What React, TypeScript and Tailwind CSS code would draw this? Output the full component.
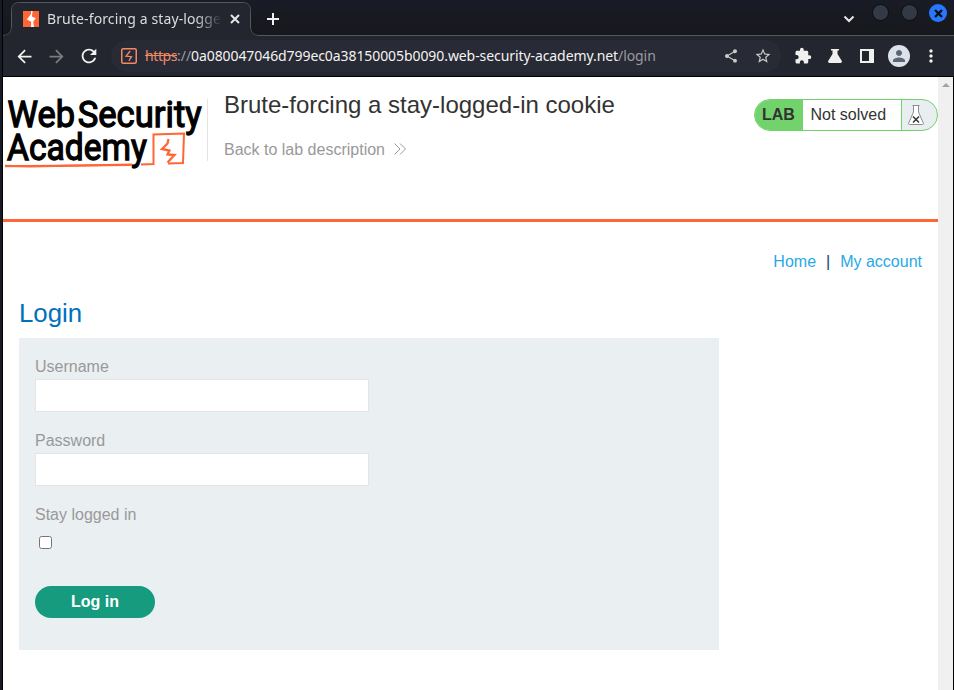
import React from "react";
import { MdArrowBack, MdArrowForward, MdRefresh, MdShare, MdStarBorder, MdExtension, MdPerson, MdMoreVert } from "react-icons/md";

const ui = "font-['Noto_Sans',sans-serif]";

function WindowButton() {
  return <span className="size-[17px] rounded-full border border-[#0b0c10] bg-[#343946]" />;
}

function TabStrip() {
  return (
    <div className={`relative flex h-9 bg-linear-to-b from-[#191c26] to-[#17181c] ${ui}`}>
      <svg className="absolute left-0 top-0" width="951" height="36" viewBox="3 0 951 36" fill="none">
        <path d="M3 35.5 Q11.5 35 11.5 27 V10.500 Q11.500 2.500 19.500 2.500 H242.500 Q250.500 2.500 250.500 10.500 V27 Q250.500 35.500 259 35.500 H954" stroke="#55575e" />
        <path d="M3 36 Q12 35 12 27 V10.500 Q12 3 19.500 3 H242.500 Q250 3 250 10.500 V27 Q250 36 259 36 Z" fill="#23252f" />
      </svg>
      <div className="relative flex h-[38px] w-[240px] items-center pl-5">
        <svg width="16" height="16" viewBox="0 0 16 16" className="shrink-0">
          <path d="M0 0h16v16H0z" fill="#ff6633" />
          <path d="M8 0H9.600L8.900 5.500l3.800 1.700-2.500 3.600L11 16H7.900l.3-5.200-4.400-2.200L8 3z" fill="#fff" />
        </svg>
        <div className="ml-2 w-[175px] overflow-hidden whitespace-nowrap text-[14px] leading-5 tracking-[0.12px] text-[#dcdde0] mask-r-from-85% mask-r-to-100%">
          Brute-forcing a stay-logged-in cookie
        </div>
        <svg width="10" height="10" viewBox="0 0 10 10" className="ml-2" stroke="#e7e7e7" strokeWidth="2">
          <path d="M1 1l8 8M9 1L1 9" />
        </svg>
      </div>
      <svg width="12" height="12" viewBox="0 0 12 12" className="relative ml-6 mt-[13px]" stroke="#f0f0f0" strokeWidth="2">
        <path d="M6 0v12M0 6h12" />
      </svg>
      <div className="relative ml-auto flex gap-3 pr-[7px] pt-[4px]">
        <svg width="12" height="8" viewBox="0 0 12 8" className="mr-[5px] mt-[11px]" fill="none" stroke="#e7e7e7" strokeWidth="2">
          <path d="M1.500 1.500L6 6l4.500-4.500" />
        </svg>
        <WindowButton />
        <WindowButton />
        <span className="-ml-px flex size-[18px] items-center justify-center rounded-full bg-[#2777ff]">
          <svg width="9" height="9" viewBox="0 0 9 9" stroke="#0c0e16" strokeWidth="2.400">
            <path d="M1 1l7 7M8 1L1 8" />
          </svg>
        </span>
      </div>
    </div>
  );
}

function Toolbar() {
  return (
    <div className={`flex h-[41px] items-center border-b border-black bg-[#23252f] pl-[11px] ${ui}`}>
      <MdArrowBack size={21} className="text-[#f1f1ee]" />
      <MdArrowForward size={21} className="ml-[11px] text-[#7b7c82]" />
      <MdRefresh size={22} className="ml-[11px] text-[#f1f1ee]" />
      <div className="ml-[11px] flex h-8 w-[670px] items-center rounded-full bg-[#282a35] pl-[10px] pr-2">
        <svg width="16" height="16" viewBox="0 0 16 16" fill="none" className="shrink-0">
          <rect x=".75" y=".75" width="14.500" height="14.500" rx="1.500" stroke="#f08a66" strokeWidth="1.500" />
          <path d="M9.200 3L5 8.200l5.500.5L7.800 13" stroke="#f08a66" strokeWidth="1.300" />
        </svg>
        <div className="ml-2 whitespace-nowrap text-[14px] leading-5 tracking-[-0.08px] text-[#9a9ba0]">
          <span className="tracking-[-0.4px] text-[#f08a66] line-through">https</span>://
          <span className="text-[#f3f3f1]">0a080047046d799ec0a38150005b0090.web-security-academy.net</span>/login
        </div>
        <MdShare size={16} className="ml-auto mr-[15px] text-[#c9c9c7]" />
        <MdStarBorder size={18} className="mr-px text-[#c9c9c7]" />
      </div>
      <MdExtension size={18} className="ml-[13px] text-[#f0f0ee]" />
      <svg width="14" height="14" viewBox="0 0 14 14" className="ml-4" fill="#f0f0ee">
        <path d="M3 0h8v1.500H9.500V5L14 12.300Q14 14 12.500 14h-11Q0 14 0 12.300L4.500 5V1.500H3z" />
      </svg>
      <svg width="14" height="14" viewBox="0 0 14 14" className="ml-[18px]">
        <path fillRule="evenodd" d="M0 0h14v14H0zM2 2v10h7V2z" fill="#f0f0ee" />
      </svg>
      <span className="ml-[14px] flex size-[22px] items-center justify-center rounded-full bg-[#dde1e8] text-[#5c6477]">
        <MdPerson size={18} />
      </span>
      <MdMoreVert size={20} className="ml-[11px] text-[#f0f0ee]" />
    </div>
  );
}

function Logo() {
  return (
    <svg width="202" height="76" viewBox="3 96 202 76" className="font-['Roboto',sans-serif] font-normal">
      <g fill="#000" stroke="#000" strokeWidth="1.300" fontSize="37.500">
        <text x="7.600" y="127.300" textLength="67.500" lengthAdjust="spacingAndGlyphs">Web</text>
        <text x="77.700" y="127.300" textLength="124" lengthAdjust="spacingAndGlyphs">Security</text>
        <text x="7" y="160" textLength="140" lengthAdjust="spacingAndGlyphs">Academy</text>
      </g>
      <g fill="none" stroke="#ff6633" strokeWidth="2">
        <path d="M5 166.200L131 165M141 164.500L153.500 164V134.500L184 133.500L183 163L168 163.500" />
        <path d="M5 165.700L30 166.500L132 164.500" />
        <path d="M168.500 139L167.500 143.500L162 149L169.500 150.500L167.500 154.500L174.500 155L167.500 162.500" strokeWidth="2.300" />
      </g>
    </svg>
  );
}

function LabStatus() {
  return (
    <div className="ml-auto mt-[22px] flex h-8 w-[184px] overflow-hidden rounded-full border border-[#72d26c] bg-[#e9eef1] text-[16px] leading-[30px] text-[#333332]">
      <span className="w-12 bg-[#72d26c] pl-[7px] font-bold">LAB</span>
      <span className="w-[99px] border-r border-[#72d26c] bg-white pl-[7.500px]">Not solved</span>
      <svg width="16" height="20" viewBox="0 0 16 20" className="ml-[6px] mt-[5px]" fill="none">
        <path d="M4.500.5h7M5.500 1v6L.5 18.500q0 1 1 1h13q1 0 1-1L10.500 7V1" fill="#fff" stroke="#8d8d8d" />
        <path d="M5 11.500l6 6M11 11.500l-6 6" stroke="#333" strokeWidth="1.500" />
      </svg>
    </div>
  );
}

function Field({ label, type }: { label: string; type: string }) {
  return (
    <label className="mb-[17px] block">
      <span className="block h-[24px] leading-[24px]">{label}</span>
      <input type={type} className="block h-[33px] w-[334px] border border-[#e4e4e4] bg-white px-2 outline-none" />
    </label>
  );
}

export default function App() {
  return (
    <div className="flex h-[690px] w-[954px] overflow-hidden bg-white font-['Liberation_Sans',Arial,sans-serif] text-[16px]">
      <div className="w-[3px] shrink-0 border-r border-black bg-[#181b26]" />
      <div className="flex w-[951px] flex-col">
        <TabStrip />
        <Toolbar />
        <div className="flex min-h-0 flex-1">
          <main className="w-[935px]">
            <header className="flex h-[145px] border-b-3 border-[#ff6633]">
              <div className="mt-[22px] h-[62px] w-[205px] border-r border-[#e4e4e4]">
                <div className="-mt-[3px]"><Logo /></div>
              </div>
              <div className="ml-4 pt-3">
                <h1 className="text-[24px] leading-8 text-[#333332]">Brute-forcing a stay-logged-in cookie</h1>
                <a className="mt-[17px] flex items-center leading-6 text-[#999]">
                  Back to lab description
                  <svg width="12" height="12" viewBox="0 0 12 12" className="-mt-0.5 ml-[9px]" fill="none" stroke="#999">
                    <path d="M.5.500L6 6 .5 11.500M6 .500L11.500 6 6 11.500" />
                  </svg>
                </a>
              </div>
              <LabStatus />
            </header>
            <nav className="mt-7 flex justify-end pr-4 leading-6 text-[#29a9e5]">
              <a>Home</a>
              <span className="mx-[10px] text-[#0b3d73]">|</span>
              <a>My account</a>
            </nav>
            <h2 className="mt-[23px] pl-4 text-[25.800px] leading-8 text-[#0071bd]">Login</h2>
            <form className="ml-4 mt-[9px] h-[312px] w-[700px] bg-[#eaeff2] px-4 pt-[17px] text-[#999]">
              <Field label="Username" type="text" />
              <Field label="Password" type="password" />
              <label className="block leading-6">
                Stay logged in
                <input type="checkbox" className="ml-1 mt-[9px] block size-[13px]" />
              </label>
              <button type="button" className="mt-[37px] block h-8 w-[120px] rounded-full bg-[#179b7f] font-bold text-white">Log in</button>
            </form>
          </main>
          <div className="flex w-[15px] justify-center bg-[#f0f0f0] pt-[6px]">
            <span className="size-0 border-x-[4px] border-b-[4px] border-x-transparent border-b-[#a3a3a3]" />
          </div>
          <div className="w-px bg-black" />
        </div>
      </div>
    </div>
  );
}
